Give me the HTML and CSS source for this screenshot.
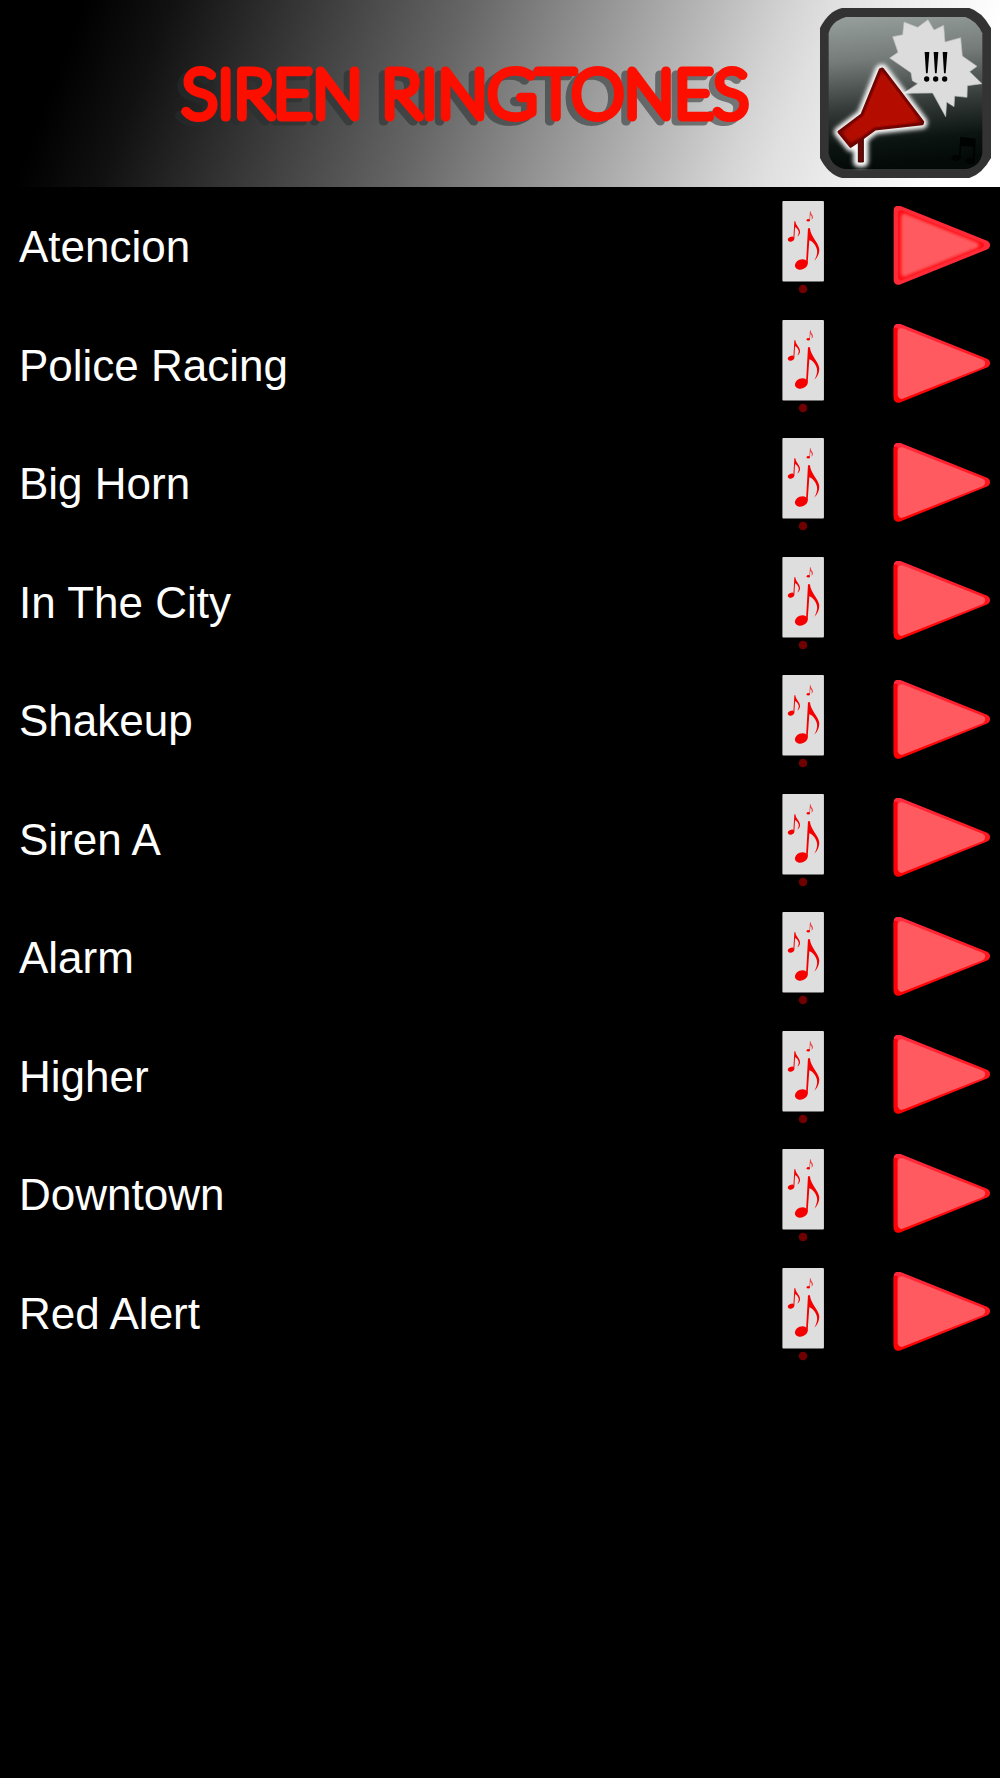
FILE: index.html
```html
<!DOCTYPE html>
<html lang="en">
<head>
<meta charset="utf-8">
<meta name="viewport" content="width=device-width, initial-scale=1">
<title>Siren Ringtones</title>
<link rel="stylesheet" href="styles.css">
</head>
<body>
<svg class="defs" aria-hidden="true">
  <defs>
    <linearGradient id="rim" x1="0" y1="0" x2="0" y2="1">
      <stop offset="0" stop-color="#ff2a3c"/>
      <stop offset="1" stop-color="#ff0000"/>
    </linearGradient>
    <filter id="soft" x="-20%" y="-20%" width="140%" height="140%"><feGaussianBlur stdDeviation="5"/></filter>
    <symbol id="notes" viewBox="36 24 126 289">
      <rect x="37" y="33" width="125" height="242" rx="3" fill="#dedede"/>
      <g fill="#f40000">
        <ellipse cx="94" cy="224" rx="20" ry="15" transform="rotate(-22 94 224)"/>
        <path d="M114 115 L120 115 C121 140 147 158 148 179 C148 192 143 203 133 213 C140 201 143 190 141 180 C138 165 128 155 118 151 L113 222 L108 222 Z"/>
        <ellipse cx="63" cy="148" rx="10" ry="7" transform="rotate(-20 63 148)"/>
        <path d="M73 94 L76 94 C77 107 90 115 90 126 C90 132 87 136 82 140 C86 133 87 129 86 125 C84 117 79 113 75 111 L73 146 L70 146 Z"/>
        <ellipse cx="115" cy="91" rx="5" ry="4"/>
        <path d="M120 64 L122 64 C122 72 129 76 129 81 C129 85 127 87 124 89 C127 84 126 78 121 75 L120 91 L118 91 Z" opacity=".7"/>
      </g>
      <circle cx="99" cy="298" r="13" fill="#700000"/>
    </symbol>
    <symbol id="play" viewBox="40 48 291 242">
      <path d="M56 60 L317 165 L56 270 Z" fill="url(#rim)" stroke="url(#rim)" stroke-width="28" stroke-linejoin="round"/>
      <path d="M48 64 V266" stroke="#ff000a" stroke-width="12" stroke-linecap="round"/>
      <path d="M66 72 L304 166 L66 260 Z" fill="#ff5a5f" stroke="#ff5a5f" stroke-width="24" stroke-linejoin="round"/>
    </symbol>
    <symbol id="play-lit" viewBox="40 48 291 242">
      <path d="M56 60 L317 165 L56 270 Z" fill="#ff2a38" stroke="#ff2a38" stroke-width="28" stroke-linejoin="round"/>
      <path d="M64 69 L304 165 L64 261 Z" fill="#ff1016" stroke="#ff1016" stroke-width="18" stroke-linejoin="round"/>
      <path d="M74 80 L288 165 L74 250 Z" fill="#ff5a5f" stroke="#ff5a5f" stroke-width="18" stroke-linejoin="round" filter="url(#soft)"/>
    </symbol>
  </defs>
</svg>

<header class="banner">
  <h1 class="banner-title">
    <svg class="title-art" viewBox="0 0 580 80" role="img" aria-label="Siren Ringtones">
      <text class="title-text" x="6" y="64">SIREN RINGTONES</text>
    </svg>
  </h1>
  <svg class="app-icon" viewBox="60 24 513 510" aria-hidden="true">
    <defs>
      <linearGradient id="sky" x1="0" y1="0" x2="0.1" y2="1">
        <stop offset="0" stop-color="#98a09d"/>
        <stop offset=".3" stop-color="#747b79"/>
        <stop offset=".6" stop-color="#363d3b"/>
        <stop offset=".85" stop-color="#0c1412"/>
        <stop offset="1" stop-color="#030a08"/>
      </linearGradient>
      <radialGradient id="horn" cx=".5" cy=".5" r=".6">
        <stop offset="0" stop-color="#b80c00"/>
        <stop offset=".65" stop-color="#ac0900"/>
        <stop offset="1" stop-color="#6e0500"/>
      </radialGradient>
      <filter id="glow" x="-20%" y="-20%" width="140%" height="140%"><feGaussianBlur stdDeviation="6"/></filter>
    </defs>
    <path d="M126 24 H508 Q545 34 573 84 V474 Q545 524 508 534 H126 Q85 524 60 474 V84 Q85 34 126 24 Z" fill="#333"/>
    <path d="M138 51 H496 Q530 62 547 100 V460 Q540 500 500 507 H134 Q94 500 86 460 V100 Q94 64 138 51 Z" fill="url(#sky)"/>
    <path d="M269 174 L294 157 L278 110 L308 104 L312 66 L353 82 L384 59 L402 90 L431 76 L435 126 L482 113 L487 168 L531 199 L509 215 L546 251 L502 257 L501 292 L464 288 L462 320 L440 306 L437 350 L398 279 L310 280 L353 251 L337 242 L333 218 Z" fill="#dcdcdc" stroke="#b9bdbb" stroke-width="2"/>
    <g fill="#000">
      <path d="M374 156 H388 L383 220 H378 Z M401 156 H415 L410 220 H405 Z M428 156 H442 L437 220 H432 Z"/>
      <circle cx="380" cy="237" r="8"/><circle cx="407" cy="237" r="8"/><circle cx="434" cy="237" r="8"/>
    </g>
    <g stroke-linejoin="round">
      <path d="M247 207 L368 366 L367 371 L225 387 L190 413 V486 H175 V430 L152 439 L117 396 L186 344 L241 209 Z" fill="#fff" stroke="#fff" stroke-width="30" filter="url(#glow)"/>
      <path d="M190 408 V486 H175 V428 Z" fill="#6a0805" stroke="#3a0402" stroke-width="3"/>
      <path d="M247 207 L368 366 L367 371 L225 387 L190 413 L152 439 L117 396 L186 344 L241 209 Z" fill="url(#horn)" stroke="#680500" stroke-width="9"/>
      <path d="M247 219 L355 362 L222 377 L152 427 L129 398 L194 350 Z" fill="#b40b00" stroke="#b40b00" stroke-width="4" filter="url(#glow)"/>
    </g>
    <g fill="#010302">
      <ellipse cx="468" cy="474" rx="13" ry="9"/><ellipse cx="511" cy="483" rx="14" ry="9"/>
      <path d="M481 410 L527 416 L524 484 L518 484 L520 441 L484 437 L481 474 L476 474 Z"/>
    </g>
  </svg>
</header>

<main>
  <ul class="tones">
    <li class="tone"><span class="tone-name">Atencion</span><button class="tone-button" aria-label="Set Atencion as ringtone"><svg class="notes"><use href="#notes"/></svg></button><button class="tone-button" aria-label="Play Atencion"><svg class="play"><use href="#play-lit"/></svg></button></li>
    <li class="tone"><span class="tone-name">Police Racing</span><button class="tone-button" aria-label="Set Police Racing as ringtone"><svg class="notes"><use href="#notes"/></svg></button><button class="tone-button" aria-label="Play Police Racing"><svg class="play"><use href="#play"/></svg></button></li>
    <li class="tone"><span class="tone-name">Big Horn</span><button class="tone-button" aria-label="Set Big Horn as ringtone"><svg class="notes"><use href="#notes"/></svg></button><button class="tone-button" aria-label="Play Big Horn"><svg class="play"><use href="#play"/></svg></button></li>
    <li class="tone"><span class="tone-name">In The City</span><button class="tone-button" aria-label="Set In The City as ringtone"><svg class="notes"><use href="#notes"/></svg></button><button class="tone-button" aria-label="Play In The City"><svg class="play"><use href="#play"/></svg></button></li>
    <li class="tone"><span class="tone-name">Shakeup</span><button class="tone-button" aria-label="Set Shakeup as ringtone"><svg class="notes"><use href="#notes"/></svg></button><button class="tone-button" aria-label="Play Shakeup"><svg class="play"><use href="#play"/></svg></button></li>
    <li class="tone"><span class="tone-name">Siren A</span><button class="tone-button" aria-label="Set Siren A as ringtone"><svg class="notes"><use href="#notes"/></svg></button><button class="tone-button" aria-label="Play Siren A"><svg class="play"><use href="#play"/></svg></button></li>
    <li class="tone"><span class="tone-name">Alarm</span><button class="tone-button" aria-label="Set Alarm as ringtone"><svg class="notes"><use href="#notes"/></svg></button><button class="tone-button" aria-label="Play Alarm"><svg class="play"><use href="#play"/></svg></button></li>
    <li class="tone"><span class="tone-name">Higher</span><button class="tone-button" aria-label="Set Higher as ringtone"><svg class="notes"><use href="#notes"/></svg></button><button class="tone-button" aria-label="Play Higher"><svg class="play"><use href="#play"/></svg></button></li>
    <li class="tone"><span class="tone-name">Downtown</span><button class="tone-button" aria-label="Set Downtown as ringtone"><svg class="notes"><use href="#notes"/></svg></button><button class="tone-button" aria-label="Play Downtown"><svg class="play"><use href="#play"/></svg></button></li>
    <li class="tone"><span class="tone-name">Red Alert</span><button class="tone-button" aria-label="Set Red Alert as ringtone"><svg class="notes"><use href="#notes"/></svg></button><button class="tone-button" aria-label="Play Red Alert"><svg class="play"><use href="#play"/></svg></button></li>
  </ul>
</main>
</body>
</html>
```
FILE: styles.css
```css
* {
  box-sizing: border-box;
}

body {
  margin: 0;
  background: #000;
  color: #fff;
  font-family: "Liberation Sans", Arial, sans-serif;
}

.defs {
  position: absolute;
  width: 0;
  height: 0;
}

.banner {
  display: flex;
  align-items: center;
  justify-content: flex-end;
  gap: 64px;
  padding: 8px 9px 9px;
  background: linear-gradient(111deg, #000 8%, #111 16%, #666 44%, #d4d4d4 74%, #e0e0e0 78%, #fff 94%);
}

.banner-title {
  flex: 0 1 580px;
  margin: 0;
}

.title-art {
  display: block;
  width: 100%;
  overflow: visible;
  filter: drop-shadow(-6px 4px 0 rgba(38, 46, 46, 0.55));
}

.title-text {
  font-family: Lato, sans-serif;
  font-size: 67px;
  font-weight: 100;
  fill: #fd0f00;
  stroke: #fd0f00;
  stroke-width: 9px;
  stroke-linejoin: round;
}

.app-icon {
  flex: none;
  width: 171px;
  height: 170px;
}

.tones {
  margin: 0;
  padding: 0;
  list-style: none;
}

.tone {
  display: flex;
  align-items: center;
  min-height: 118px;
  padding: 0 10px 0 19px;
}

.tone:nth-child(even) {
  min-height: 119px;
}

.tone-name {
  flex: 1;
  padding-top: 2px;
  font-size: 44px;
  line-height: 50px;
}

.tone-button {
  padding: 0;
  border: 0;
  background: none;
  cursor: pointer;
}

.tone-button + .tone-button {
  margin-left: 69px;
}

.notes,
.play {
  display: block;
}

.notes {
  width: 42px;
  height: 96px;
}

.play {
  width: 97px;
  height: 81px;
}
```
